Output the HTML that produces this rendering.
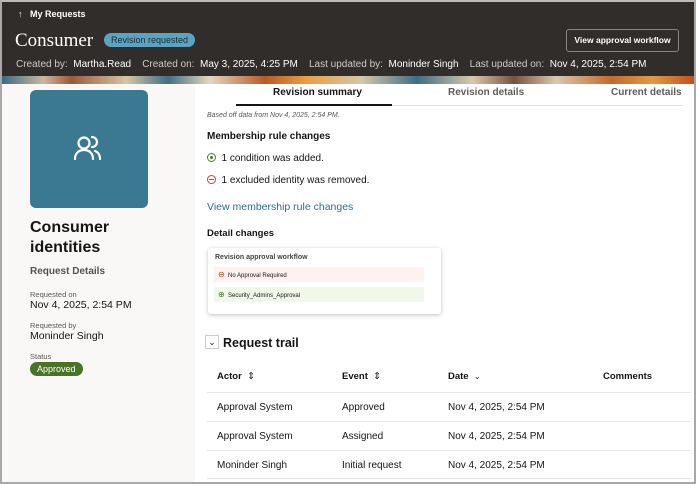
<!DOCTYPE html>
<html><head><style>
*{margin:0;padding:0;box-sizing:border-box}
body{width:696px;height:484px;overflow:hidden;font-family:"Liberation Sans",sans-serif;color:#161513;background:#fff;position:relative}
.frame{position:absolute;inset:0;border:2px solid #a9a9a9;border-top-color:#bbb}
.hdr{position:absolute;left:2px;top:2px;width:692px;height:74px;background:#312d2a;color:#fff}
.ban{position:absolute;left:2px;top:76px;width:692px;height:8px;background:linear-gradient(90deg,#3c6a80 0%,#c9b9a0 6%,#9a5a3a 10%,#d6c4a6 18%,#406f84 24%,#e3d7c0 30%,#b85a28 38%,#e8a040 44%,#d6c6a8 52%,#3e6e83 60%,#d8c9ae 68%,#7a5040 74%,#d8c9ae 80%,#c46a30 88%,#e09a40 94%,#c05020 100%)}
.left{position:absolute;left:2px;top:84px;width:193px;height:398px;background:#f9f8f6}
.abs{position:absolute;white-space:nowrap}
.tile{position:absolute;left:30px;top:90px;width:118px;height:118px;border-radius:6px;background:#3b7891}
.pill{display:inline-block;border-radius:10px}
.g{color:#5a5754}
.row{position:absolute;left:207px;width:484px;border-top:1px solid #e8e6e3}
</style></head><body>
<div class="hdr">
 <div class="abs" style="left:16px;top:7px;font-size:9px;font-weight:bold">↑&nbsp;&nbsp;&nbsp;My Requests</div>
 <div class="abs" style="left:13px;top:28px;font-family:'Liberation Serif',serif;font-size:19px">Consumer</div>
 <div class="abs pill" style="left:102px;top:31px;background:#5aa4c2;color:#1c2a32;font-size:9px;padding:2px 7px">Revision requested</div>
 <div class="abs" style="left:564px;top:27px;width:113px;height:23px;border:1px solid #8a8683;border-radius:3px;font-size:8.5px;font-weight:bold;text-align:center;line-height:21px">View approval workflow</div>
 <div class="abs" style="left:14px;top:57px;font-size:10px;color:#cfcac5">Created by:&nbsp; <span style="color:#fff">Martha.Read</span>&nbsp;&nbsp;&nbsp; Created on:&nbsp; <span style="color:#fff">May 3, 2025, 4:25 PM</span>&nbsp;&nbsp;&nbsp; Last updated by:&nbsp; <span style="color:#fff">Moninder Singh</span>&nbsp;&nbsp;&nbsp; Last updated on:&nbsp; <span style="color:#fff">Nov 4, 2025, 2:54 PM</span></div>
</div>
<div class="ban"></div>
<div class="left"></div>
<div class="tile"><svg width="118" height="118" viewBox="0 0 118 118"><g fill="none" stroke="#fff" stroke-width="2.2" stroke-linecap="round"><circle cx="54" cy="53" r="5.5"/><path d="M45 69c0-6 4-9 9-9s9 3 9 9"/><path d="M62 47a5 5 0 0 1 0 10"/><path d="M65 61c3 1 5 4 5 8"/></g></svg></div>
<div class="abs" style="left:30px;top:218px;font-size:16px;font-weight:bold;line-height:20px">Consumer<br>identities</div>
<div class="abs" style="left:30px;top:266px;font-size:10px;font-weight:bold;color:#55524f">Request Details</div>
<div class="abs g" style="left:30px;top:290px;font-size:7.5px">Requested on</div>
<div class="abs" style="left:30px;top:299px;font-size:10.5px">Nov 4, 2025, 2:54 PM</div>
<div class="abs g" style="left:30px;top:321px;font-size:7.5px">Requested by</div>
<div class="abs" style="left:30px;top:330px;font-size:10.5px">Moninder Singh</div>
<div class="abs g" style="left:30px;top:352px;font-size:7.5px">Status</div>
<div class="abs pill" style="left:30px;top:362px;background:#4a7425;color:#fff;font-size:9px;padding:2px 7px">Approved</div>

<div class="abs" style="left:273px;top:87px;font-size:10px;font-weight:bold">Revision summary</div>
<div class="abs" style="left:448px;top:87px;font-size:10px;font-weight:bold;color:#5f5c59">Revision details</div>
<div class="abs" style="left:611px;top:87px;font-size:10px;font-weight:bold;color:#5f5c59">Current details</div>
<div class="abs" style="left:236px;top:104px;width:156px;height:2px;background:#161513"></div>
<div class="abs" style="left:392px;top:105px;width:291px;height:1px;background:#e4e2df"></div>
<div class="abs g" style="left:207px;top:112px;font-size:7px;font-style:italic">Based off data from Nov 4, 2025, 2:54 PM.</div>
<div class="abs" style="left:207px;top:131px;font-size:10px;font-weight:bold">Membership rule changes</div>
<div class="abs" style="left:207px;top:153px;font-size:10px"><span style="display:inline-block;width:9px;height:9px;border:1px solid #4a7a2a;border-radius:50%;vertical-align:-1px;position:relative"><span style="position:absolute;left:2px;top:2px;width:3px;height:3px;background:#4a7a2a;border-radius:50%"></span></span>&nbsp; 1 condition was added.</div>
<div class="abs" style="left:207px;top:175px;font-size:10px"><span style="display:inline-block;width:9px;height:9px;border:1px solid #c74634;border-radius:50%;vertical-align:-1px;position:relative"><span style="position:absolute;left:1px;top:3px;width:5px;height:1px;background:#c74634"></span></span>&nbsp; 1 excluded identity was removed.</div>
<div class="abs" style="left:207px;top:201px;font-size:10.5px;color:#2a6f8f">View membership rule changes</div>
<div class="abs" style="left:207px;top:228px;font-size:9.5px;font-weight:bold">Detail changes</div>
<div class="abs" style="left:208px;top:248px;width:233px;height:66px;background:#fff;border-radius:3px;box-shadow:0 1px 4px rgba(0,0,0,.25)"></div>
<div class="abs" style="left:215px;top:254px;font-size:7px;font-weight:bold;color:#444">Revision approval workflow</div>
<div class="abs" style="left:214px;top:267px;width:210px;height:15px;background:#fdf2f0;font-size:6px;line-height:15px;padding-left:4px"><span style="color:#c74634;font-size:8px">⊖</span>&nbsp; No Approval Required</div>
<div class="abs" style="left:214px;top:287px;width:210px;height:15px;background:#f1f8ea;font-size:6px;line-height:15px;padding-left:4px"><span style="color:#4a7a2a;font-size:8px">⊕</span>&nbsp; Security_Admins_Approval</div>

<div class="abs" style="left:205px;top:335px;width:14px;height:14px;border:1px solid #ccc;font-size:9px;text-align:center;line-height:12px">⌄</div>
<div class="abs" style="left:223px;top:336px;font-size:12.5px;font-weight:bold">Request trail</div>
<div class="abs" style="left:217px;top:371px;font-size:9.5px;font-weight:bold">Actor&nbsp; <span style="font-weight:normal">⇕</span></div>
<div class="abs" style="left:342px;top:371px;font-size:9.5px;font-weight:bold">Event&nbsp; <span style="font-weight:normal">⇕</span></div>
<div class="abs" style="left:448px;top:371px;font-size:9.5px;font-weight:bold">Date&nbsp; <span style="font-weight:normal;font-size:8px">⌄</span></div>
<div class="abs" style="left:603px;top:371px;font-size:9.5px;font-weight:bold">Comments</div>
<div class="row" style="top:392px"></div><div class="row" style="top:421px"></div><div class="row" style="top:450px"></div><div class="row" style="top:478px"></div>
<div class="abs" style="left:217px;top:402px;font-size:10px">Approval System</div><div class="abs" style="left:342px;top:402px;font-size:10px">Approved</div><div class="abs" style="left:448px;top:402px;font-size:10px">Nov 4, 2025, 2:54 PM</div>
<div class="abs" style="left:217px;top:431px;font-size:10px">Approval System</div><div class="abs" style="left:342px;top:431px;font-size:10px">Assigned</div><div class="abs" style="left:448px;top:431px;font-size:10px">Nov 4, 2025, 2:54 PM</div>
<div class="abs" style="left:217px;top:460px;font-size:10px">Moninder Singh</div><div class="abs" style="left:342px;top:460px;font-size:10px">Initial request</div><div class="abs" style="left:448px;top:460px;font-size:10px">Nov 4, 2025, 2:54 PM</div>
<div class="frame"></div>
</body></html>
